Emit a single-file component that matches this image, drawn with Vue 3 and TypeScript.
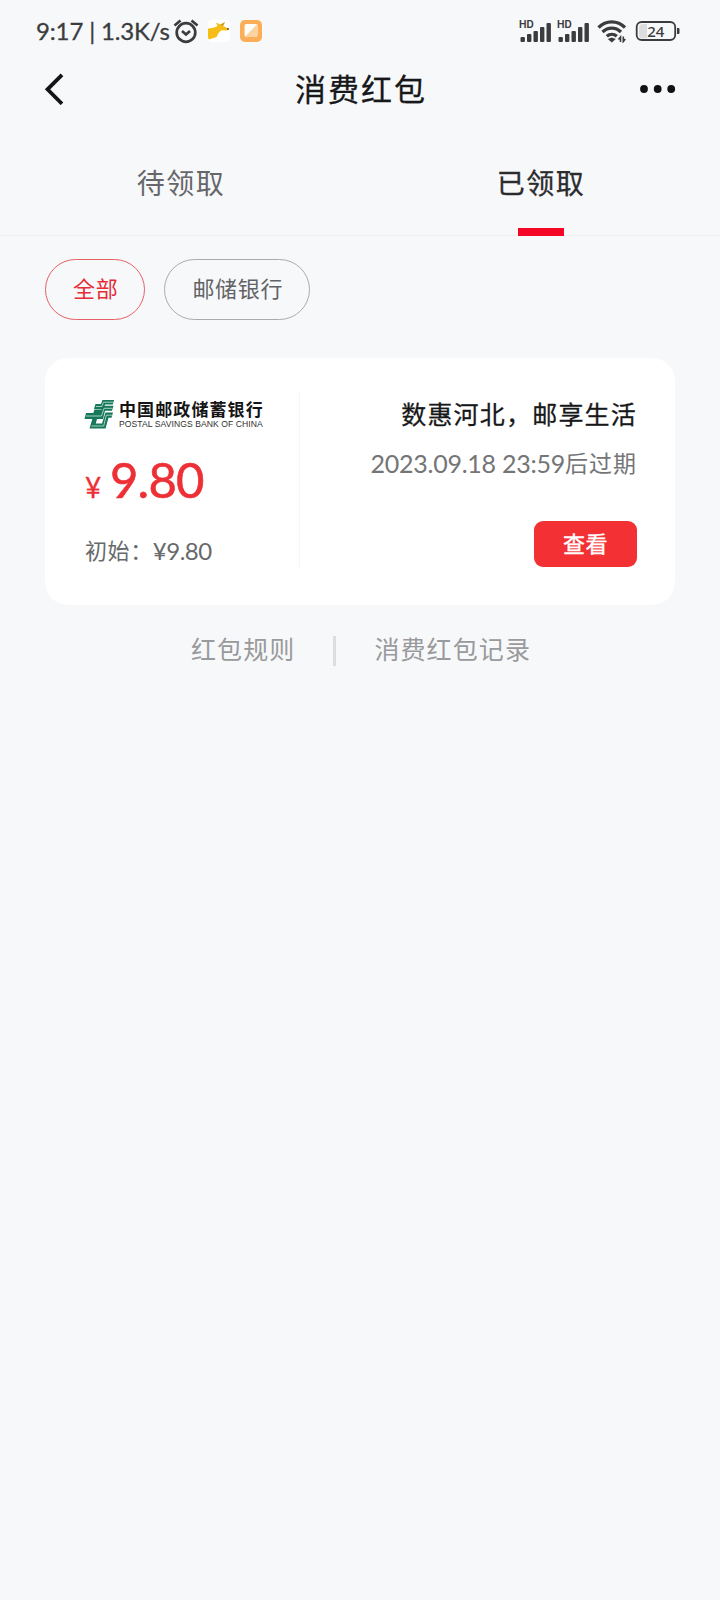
<script setup lang="ts">
import { ref } from 'vue'

const tabs = ['待领取', '已领取']
const activeTab = ref(1)
const filters = ['全部', '邮储银行']
const activeFilter = ref(0)
const bars = [5, 8, 11, 15, 19]
</script>

<template>
  <main class="page">
    <header class="status">
      <span class="clock">9:17 | 1.3K/s</span>
      <svg class="alarm" width="26" height="26" viewBox="0 0 26 26" fill="none" stroke="#3b3c3e" stroke-width="2.7">
        <circle cx="13" cy="14.500" r="9.300" />
        <path d="M1.500 7.500 7.500 2.500M24.500 7.500 18.500 2.500M9 13l4 3.500 4-3.500" />
      </svg>
      <svg class="deer" width="22" height="22" viewBox="0 0 22 22">
        <rect width="22" height="22" rx="4" fill="#fff" />
        <path d="M0 8.500C4 8.500 7 7.500 9.500 6L8 2.500l4.500 2L17 2l-2 4 5.500 2.500-1 2-6-.3C11 11.500 10 14 8.500 17L1 19.500 0 18Z" fill="#f6bd16" />
        <path d="m12 5 5-3-2 4" fill="#c99a20" />
        <circle cx="20" cy="9" r=".9" fill="#5d4515" />
      </svg>
      <svg class="note" width="22" height="22" viewBox="0 0 22 22">
        <rect width="22" height="22" rx="5" fill="#fbae57" />
        <rect x="4.500" y="4" width="13" height="13" rx="2" fill="#fff4e2" />
        <path d="M17.500 4v11a2 2 0 0 1-2 2H4.500Z" fill="#fbd3a0" />
        <path d="M5 16.500V6a2 2 0 0 1 2-2h10Z" fill="#fffdf8" />
      </svg>
      <div class="system">
        <svg v-for="n in 2" :key="n" class="signal" width="34" height="24" viewBox="0 0 34 24">
          <text x="0" y="9" class="hd">HD</text>
          <rect v-for="(h, i) in bars" :key="i" :x="1.5 + i * 6.5" :y="23 - h" width="4.400" :height="h" rx="1" fill="#3b3c3e" />
        </svg>
        <svg class="wifi" width="30" height="24" viewBox="0 0 30 24" fill="none" stroke="#3b3c3e" stroke-width="3.3">
          <path d="M1.500 8.500C9 1 20.500 1 28 8.500M5.500 13c5.500-5.200 13-5.200 18.500 0M9.800 17.300c3-2.600 7-2.600 10 0" />
          <path d="m10.800 20 4-1.500 4 1.500-4 3.500Z" fill="#3b3c3e" stroke="none" />
          <path d="M23.500 23v-5l-2 2.500M26.300 17.500v5l2-2.500" stroke-width="1.600" />
        </svg>
        <svg class="battery" width="46" height="22" viewBox="0 0 46 22">
          <path d="M8 4h4v14.500H8a4 4 0 0 1-4-4V8a4 4 0 0 1 4-4Z" fill="#dcddde" />
          <rect x="1.700" y="2" width="38.500" height="18" rx="5" fill="none" stroke="#3b3c3e" stroke-width="1.800" />
          <path d="M42 8h1.500q1 0 1 1v4q0 1-1 1H42Z" fill="#3b3c3e" />
          <text x="20.800" y="16.600" text-anchor="middle" class="level">24</text>
        </svg>
      </div>
    </header>

    <nav class="titlebar">
      <svg class="back" width="20" height="32" viewBox="0 0 20 32" fill="none" stroke="#141517" stroke-width="3.800">
        <path d="M18 1.800 3.500 16.300 18 30.800" />
      </svg>
      <h1>消费红包</h1>
      <svg class="more" width="36" height="8" viewBox="0 0 36 8" fill="#111214">
        <circle cx="4" cy="4" r="3.900" /><circle cx="17.700" cy="4" r="3.900" /><circle cx="31.200" cy="4" r="3.900" />
      </svg>
    </nav>

    <div class="tabs">
      <button v-for="(tab, i) in tabs" :key="tab" :class="{ active: activeTab === i }" @click="activeTab = i">
        <span>{{ tab }}</span>
      </button>
    </div>

    <div class="filters">
      <button v-for="(f, i) in filters" :key="f" :class="{ active: activeFilter === i }" @click="activeFilter = i"><span>{{ f }}</span></button>
    </div>

    <article class="card">
      <section class="amount">
        <div class="bank">
          <svg width="30" height="30" viewBox="0 0 30 30">
            <g fill="#17775a">
              <path d="M18.500 1H30L28.800 5.600H21L19.700 10H10L11.500 5H17Z" />
              <path d="M10.500 10.500H17.500L19 6.800H29.500L28 11.800H21L19 20H0.500L2 14H9.300Z" />
              <path d="M21.500 13.500H29L27.500 18.800H24.500L21.500 29.500H5.500L8.300 20H13L11.800 24.500H18Z" />
            </g>
            <path d="M29 3.200H19.500L17.800 7.500H12M28.500 9.300H20L17.500 17H2M28 16.200H22.300L19.700 27H7.500" fill="none" stroke="#c8e3d8" stroke-width=".8" />
          </svg>
          <div class="bank-name">
            <strong>中国邮政储蓄银行</strong>
            <small>POSTAL SAVINGS BANK OF CHINA</small>
          </div>
        </div>
        <p class="price"><span class="yen">¥</span><span>9.80</span></p>
        <p class="initial"><span>初始：</span><span class="initial-value">¥9.80</span></p>
      </section>
      <section class="detail">
        <h2>数惠河北，邮享生活</h2>
        <p class="expiry"><span class="date">2023.09.18 23:59</span><span>后过期</span></p>
        <button class="view">查看</button>
      </section>
    </article>

    <footer class="links">
      <a>红包规则</a>
      <i></i>
      <a>消费红包记录</a>
    </footer>
  </main>
</template>

<style>
html, body { margin: 0; background: #f7f8fa; }
</style>

<style scoped>
* { box-sizing: border-box; }
.page {
  width: 720px;
  height: 1600px;
  overflow: hidden;
  background: #f7f8fa;
  color: #17181a;
  font-family: Lato, "Noto Sans CJK SC", sans-serif;
}
button { border: 0; padding: 0; background: none; font: inherit; color: inherit; }
h1, h2, p { margin: 0; font-weight: 400; white-space: nowrap; }
.status { display: flex; align-items: center; height: 62px; padding-left: 36px; }
.clock { width: 137px; font-size: 24px; line-height: 30px; letter-spacing: -.15px; white-space: nowrap; color: #3b3c3e; -webkit-text-stroke: .3px #3b3c3e; }
.alarm { margin-top: -1px; }
.deer { margin-left: 9px; }
.note { margin-left: 10px; }
.system { display: flex; align-items: center; margin-left: auto; padding-right: 39px; }
.signal { margin-right: 4px; }
.hd { font: 700 10px Inter, sans-serif; fill: #3b3c3e; }
.wifi { margin: 0 8px 0 2px; }
.level { font: 500 15px "Noto Sans", sans-serif; fill: #3b3c3e; }
.titlebar { display: grid; grid-template-columns: 150px 1fr 150px; align-items: center; height: 54px; }
.back { margin-left: 44px; }
.titlebar h1 { text-align: center; font-size: 31px; line-height: 54px; letter-spacing: 2px; padding-left: 2px; -webkit-text-stroke: .3px #17181a; }
.more { justify-self: end; margin-right: 44px; }
.tabs { display: grid; grid-template-columns: 1fr 1fr; height: 120px; border-bottom: 1px solid #eeeff1; }
.tabs button { display: flex; flex-direction: column; align-items: center; height: 120px; padding: 45px 0 0 2px; font-size: 28px; line-height: 44px; letter-spacing: 1.500px; color: #66676a; }
.tabs .active { color: #2b2c2e; -webkit-text-stroke: .3px #2b2c2e; }
.tabs .active::after { content: ""; width: 46px; height: 8px; margin-top: 23px; background: #f40724; }
.filters { display: flex; gap: 19px; padding: 23px 0 0 45px; }
.filters button { height: 61px; padding: 0 26px 0 27px; border: 1px solid #aaabad; border-radius: 31px; font-size: 22px; line-height: 57px; letter-spacing: .7px; color: #626365; }
.filters span { display: block; height: 59px; }
.filters .active { border-color: #e66167; color: #e42d36; }
.card { display: flex; width: 630px; height: 247px; margin: 38px 0 0 45px; border-radius: 23px; background: #fff; }
.amount { position: relative; width: 255px; padding: 41px 0 0 39px; }
.amount::after { content: ""; position: absolute; right: 0; top: 34px; width: 1px; height: 176px; background: #f5f6f7; }
.bank { display: flex; height: 30px; }
.bank-name { display: flex; flex-direction: column; margin-left: 5px; white-space: nowrap; }
.bank-name strong { font-family: "Noto Sans CJK SC", sans-serif; font-size: 17px; font-weight: 700; line-height: 20px; letter-spacing: 1.100px; color: #151515; }
.bank-name small { font-family: "Liberation Sans", sans-serif; font-size: 8.600px; line-height: 10px; letter-spacing: .06px; color: #303030; }
.price { display: flex; align-items: baseline; height: 60px; margin-top: 20px; font-size: 49px; line-height: 60px; letter-spacing: -.8px; color: #ed3036; -webkit-text-stroke: .6px #ed3036; }
.yen { width: 26px; padding-left: 1px; font-size: 28px; -webkit-text-stroke: .3px #ed3036; }
.initial { display: flex; align-items: center; height: 34px; margin: 25px 0 0 1px; font-size: 22px; line-height: 34px; letter-spacing: .6px; color: #68696b; }
.initial-value { font-size: 24px; letter-spacing: -.5px; }
.detail { display: flex; flex: 1; flex-direction: column; align-items: flex-end; padding: 36px 39px 0 0; }
.detail h2 { height: 40px; font-size: 25px; line-height: 40px; letter-spacing: 1.200px; margin-right: -1px; -webkit-text-stroke: .3px #17181a; }
.expiry { display: flex; height: 36px; margin: 11px -1px 0 0; font-size: 23px; line-height: 36px; letter-spacing: 1px; color: #747577; }
.date { font-size: 25px; letter-spacing: -.25px; }
.view { width: 103px; height: 46px; margin: 40px -1px 0 0; border-radius: 9px; background: #f33033; color: #fff; font-size: 22px; line-height: 44px; letter-spacing: .4px; -webkit-text-stroke: .4px #fff; }
.links { display: flex; align-items: center; height: 40px; margin-top: 24px; padding-left: 191px; font-size: 25px; line-height: 40px; letter-spacing: 1.100px; color: #999a9c; }
.links i { width: 3px; height: 30px; margin: 3px 38px 0 38px; background: #dcddde; }
</style>
